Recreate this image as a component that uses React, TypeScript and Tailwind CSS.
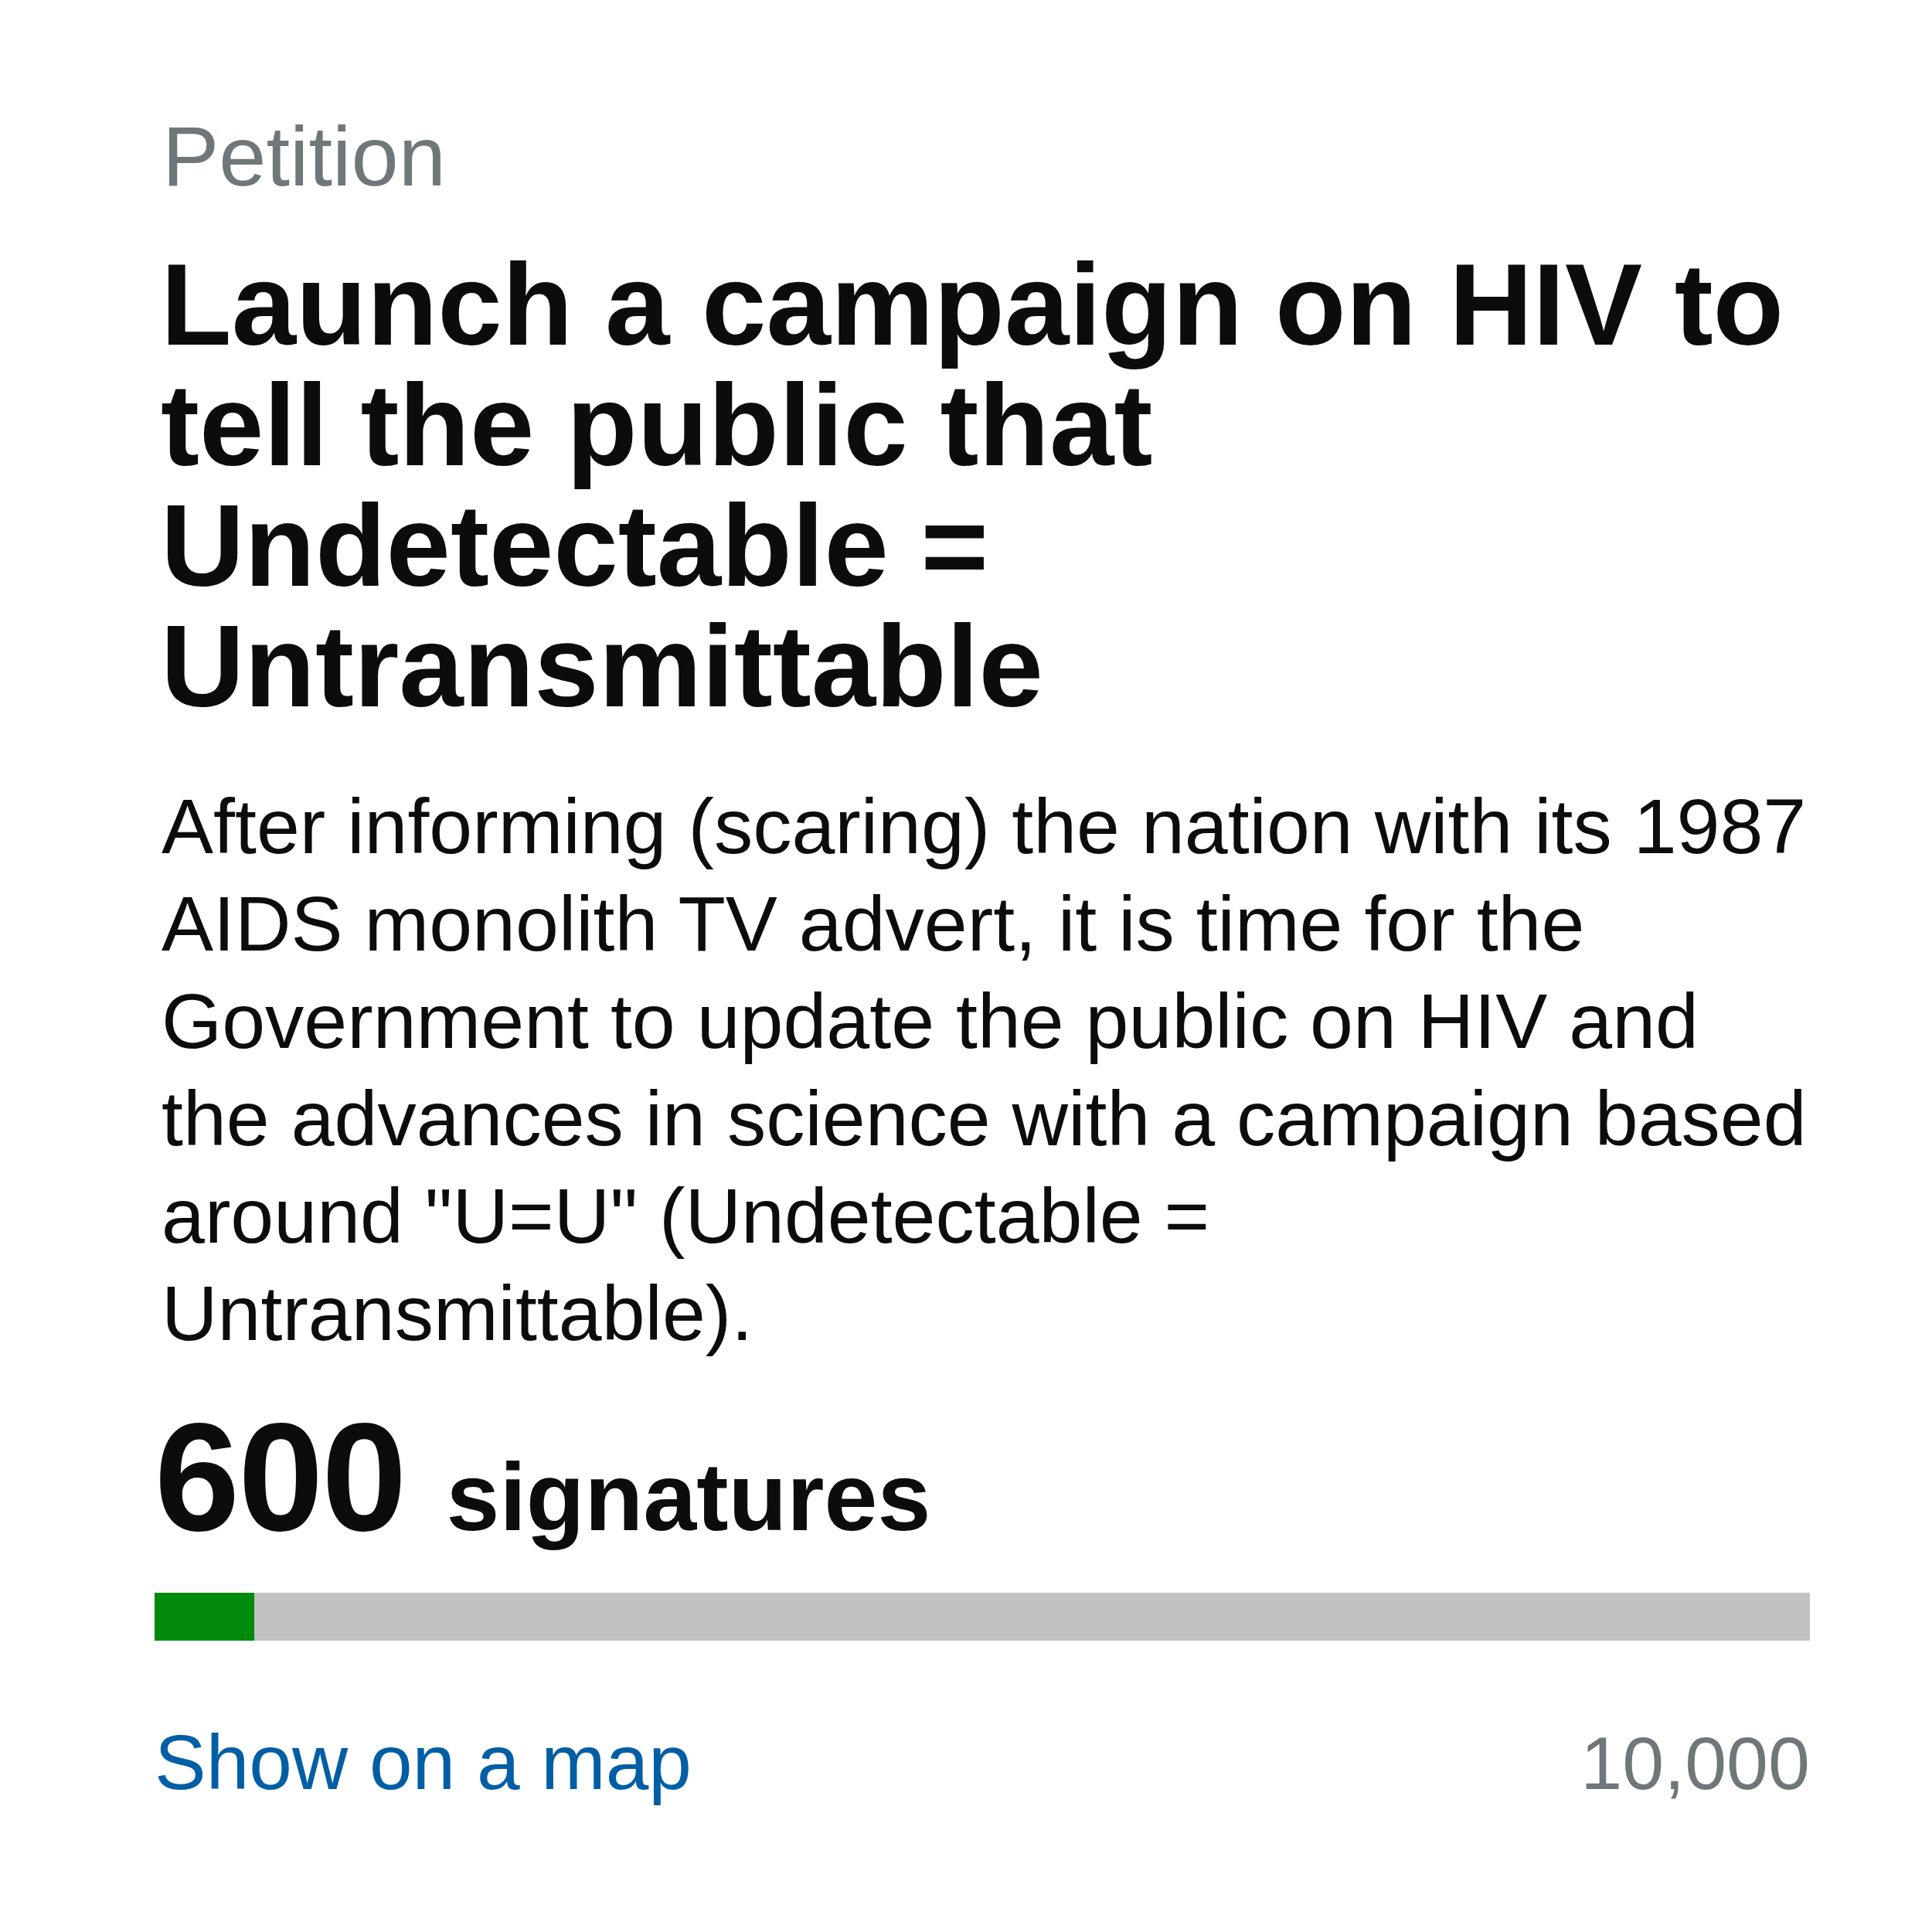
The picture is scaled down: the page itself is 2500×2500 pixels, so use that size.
import React from 'react';

const signatures = 600;
const target = 10000;

const headingLines = [
  'Launch a campaign on HIV to',
  'tell the public that',
  'Undetectable =',
  'Untransmittable',
];

const bodyLines = [
  'After informing (scaring) the nation with its 1987',
  'AIDS monolith TV advert, it is time for the',
  'Government to update the public on HIV and',
  'the advances in science with a campaign based',
  'around "U=U" (Undetectable =',
  'Untransmittable).',
];

const App: React.FC = () => {
  const percent = Math.min(100, (signatures / target) * 100);

  return (
    <div className="w-[2500px] h-[2500px] bg-white font-['Liberation_Sans',Arial,Helvetica,sans-serif]">
      <div className="pl-[200px] pt-[136px] w-[2342px]">
        {/* Label */}
        <div className="pl-[10px] text-[110px] leading-[132px] text-[#6f777b]">Petition</div>

        {/* Title */}
        <h1 className="mt-[48px] pl-[8px] text-[150px] leading-[156px] font-bold text-[#0b0c0c] whitespace-nowrap">
          {headingLines.map((line) => (
            <div key={line}>{line}</div>
          ))}
        </h1>

        {/* Summary */}
        <p className="mt-[66px] pl-[9px] text-[100.5px] leading-[126px] text-[#0b0c0c] whitespace-nowrap">
          {bodyLines.map((line) => (
            <span key={line} className="block">
              {line}
            </span>
          ))}
        </p>

        {/* Count */}
        <div className="mt-[52px] flex items-baseline leading-[196px] font-bold text-[#0b0c0c]">
          <span className="text-[198px] tracking-[-0.01em]">{signatures}&nbsp;</span>
          <span className="text-[124px]">signatures</span>
        </div>

        {/* Progress */}
        <div className="mt-[26px] h-[62px] bg-[#bfc1c3]">
          <div className="h-full bg-[#008a0c]" style={{ width: `${percent}%` }} />
        </div>

        {/* Footer */}
        <div className="mt-[95px] flex items-baseline justify-between text-[100px] leading-[125px]">
          <a href="#" className="text-[#005ea5]">
            Show on a map
          </a>
          <span className="text-[#6f777b] text-[97px]">10,000</span>
        </div>
      </div>
    </div>
  );
};

export default App;
